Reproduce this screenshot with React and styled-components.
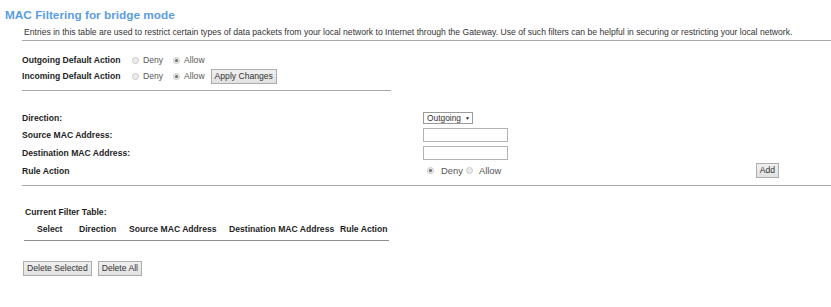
import React from 'react';
import styled, { createGlobalStyle } from 'styled-components';

const GlobalStyle = createGlobalStyle`
  body {
    margin: 0;
    background: #ffffff;
    font-family: 'Liberation Sans', Arial, sans-serif;
    color: #222222;
  }
`;

const Page = styled.div`
  width: 831px;
  padding-top: 8px;
`;

const Title = styled.h2`
  margin: 0 0 0 5px;
  font-size: 11.8px;
  line-height: 14px;
  font-weight: bold;
  color: #5b9ddf;
`;

const Body = styled.div`
  margin-left: 22px;
`;

const Intro = styled.p`
  margin: 3px 0 0;
  padding: 0 0 1px 2px;
  font-size: 8.6px;
  line-height: 14px;
  color: #333333;
  border-bottom: 1px solid #a8a8a8;
`;

const DefaultsBlock = styled.div`
  width: 369px;
  padding: 11px 0 6px;
  border-bottom: 1px solid #a8a8a8;
`;

const DefaultRow = styled.div`
  display: flex;
  align-items: center;
  height: 16px;
`;

const Label = styled.span`
  display: inline-block;
  width: ${(props) => props.width || 'auto'};
  font-size: 8.6px;
  font-weight: bold;
  color: #1e1e1e;
`;

const RadioGroup = styled.label`
  display: inline-flex;
  align-items: center;
  margin-right: ${(props) => props.gap || '8px'};
  font-size: ${(props) => props.size || '8.6px'};
  color: #555555;
`;

const RadioDot = styled.span`
  position: relative;
  display: inline-block;
  width: 5px;
  height: 5px;
  margin-right: ${(props) => props.space || '4px'};
  border: 1px solid #c9c9c9;
  border-radius: 50%;
  background: #ececec;

  &::after {
    content: '';
    display: ${(props) => (props.checked ? 'block' : 'none')};
    position: absolute;
    left: 1px;
    top: 1px;
    width: 3px;
    height: 3px;
    border-radius: 50%;
    background: #6a6a6a;
  }
`;

const Button = styled.button`
  height: 15px;
  padding: 0 3px;
  margin-right: ${(props) => props.gap || '0'};
  font-family: 'Liberation Sans', Arial, sans-serif;
  font-size: 8.6px;
  line-height: 13px;
  color: #333333;
  background: linear-gradient(#f0f0f0, #e1e1e1);
  border: 1px solid #adadad;
  border-radius: 0;
`;

const RuleForm = styled.div`
  display: grid;
  grid-template-columns: 401px 1fr auto;
  grid-auto-rows: 17.67px;
  align-items: center;
  padding: 18px 52px 5px 0;
  border-bottom: 1px solid #a8a8a8;
`;

const Select = styled.div`
  display: inline-flex;
  align-items: center;
  width: 45px;
  height: 10px;
  padding-left: 3px;
  border: 1px solid #9a9a9a;
  font-size: 8.4px;
  color: #333333;

  &::after {
    content: '▼';
    margin-left: 4px;
    font-size: 5px;
    color: #222222;
  }
`;

const TextBox = styled.div`
  width: 83px;
  height: 12px;
  border: 1px solid #b4b4b4;
  background: #ffffff;
`;

const RuleRadios = styled.div`
  display: flex;
  align-items: center;
  padding-left: 4px;
`;

const TableTitle = styled.div`
  margin: 20px 0 0 3px;
  font-size: 8.6px;
  line-height: 12px;
  font-weight: bold;
  color: #1e1e1e;
`;

const FilterTable = styled.div`
  display: flex;
  width: 365px;
  margin: 5px 0 0 2px;
  padding: 0 0 5px 13px;
  border-bottom: 1px solid #8f8f8f;
  box-sizing: border-box;
`;

const HeadCell = styled.span`
  width: ${(props) => props.width};
  font-size: 8.6px;
  line-height: 12px;
  font-weight: bold;
  color: #1e1e1e;
`;

const Actions = styled.div`
  display: flex;
  margin: 20px 0 0 1px;
`;

function DefaultAction({ label, allow, children }) {
  return (
    <DefaultRow>
      <Label width="110px">{label}</Label>
      <RadioGroup gap="10px">
        <RadioDot checked={!allow} />
        Deny
      </RadioGroup>
      <RadioGroup gap="6px">
        <RadioDot checked={allow} />
        Allow
      </RadioGroup>
      {children}
    </DefaultRow>
  );
}

export default function App() {
  return (
    <Page>
      <GlobalStyle />
      <Title>MAC Filtering for bridge mode</Title>
      <Body>
        <Intro>
          Entries in this table are used to restrict certain types of data packets from your local
          network to Internet through the Gateway. Use of such filters can be helpful in securing or
          restricting your local network.
        </Intro>

        <DefaultsBlock>
          <DefaultAction label="Outgoing Default Action" allow />
          <DefaultAction label="Incoming Default Action" allow>
            <Button>Apply Changes</Button>
          </DefaultAction>
        </DefaultsBlock>

        <RuleForm>
          <Label>Direction:</Label>
          <Select>Outgoing</Select>
          <span />
          <Label>Source MAC Address:</Label>
          <TextBox />
          <span />
          <Label>Destination MAC Address:</Label>
          <TextBox />
          <span />
          <Label>Rule Action</Label>
          <RuleRadios>
            <RadioGroup gap="3px" size="9.4px">
              <RadioDot checked space="7px" />
              Deny
            </RadioGroup>
            <RadioGroup size="9.4px">
              <RadioDot space="6px" />
              Allow
            </RadioGroup>
          </RuleRadios>
          <Button>Add</Button>
        </RuleForm>

        <TableTitle>Current Filter Table:</TableTitle>
        <FilterTable>
          <HeadCell width="42px">Select</HeadCell>
          <HeadCell width="50px">Direction</HeadCell>
          <HeadCell width="100px">Source MAC Address</HeadCell>
          <HeadCell width="111px">Destination MAC Address</HeadCell>
          <HeadCell width="auto">Rule Action</HeadCell>
        </FilterTable>

        <Actions>
          <Button gap="6px">Delete Selected</Button>
          <Button>Delete All</Button>
        </Actions>
      </Body>
    </Page>
  );
}
